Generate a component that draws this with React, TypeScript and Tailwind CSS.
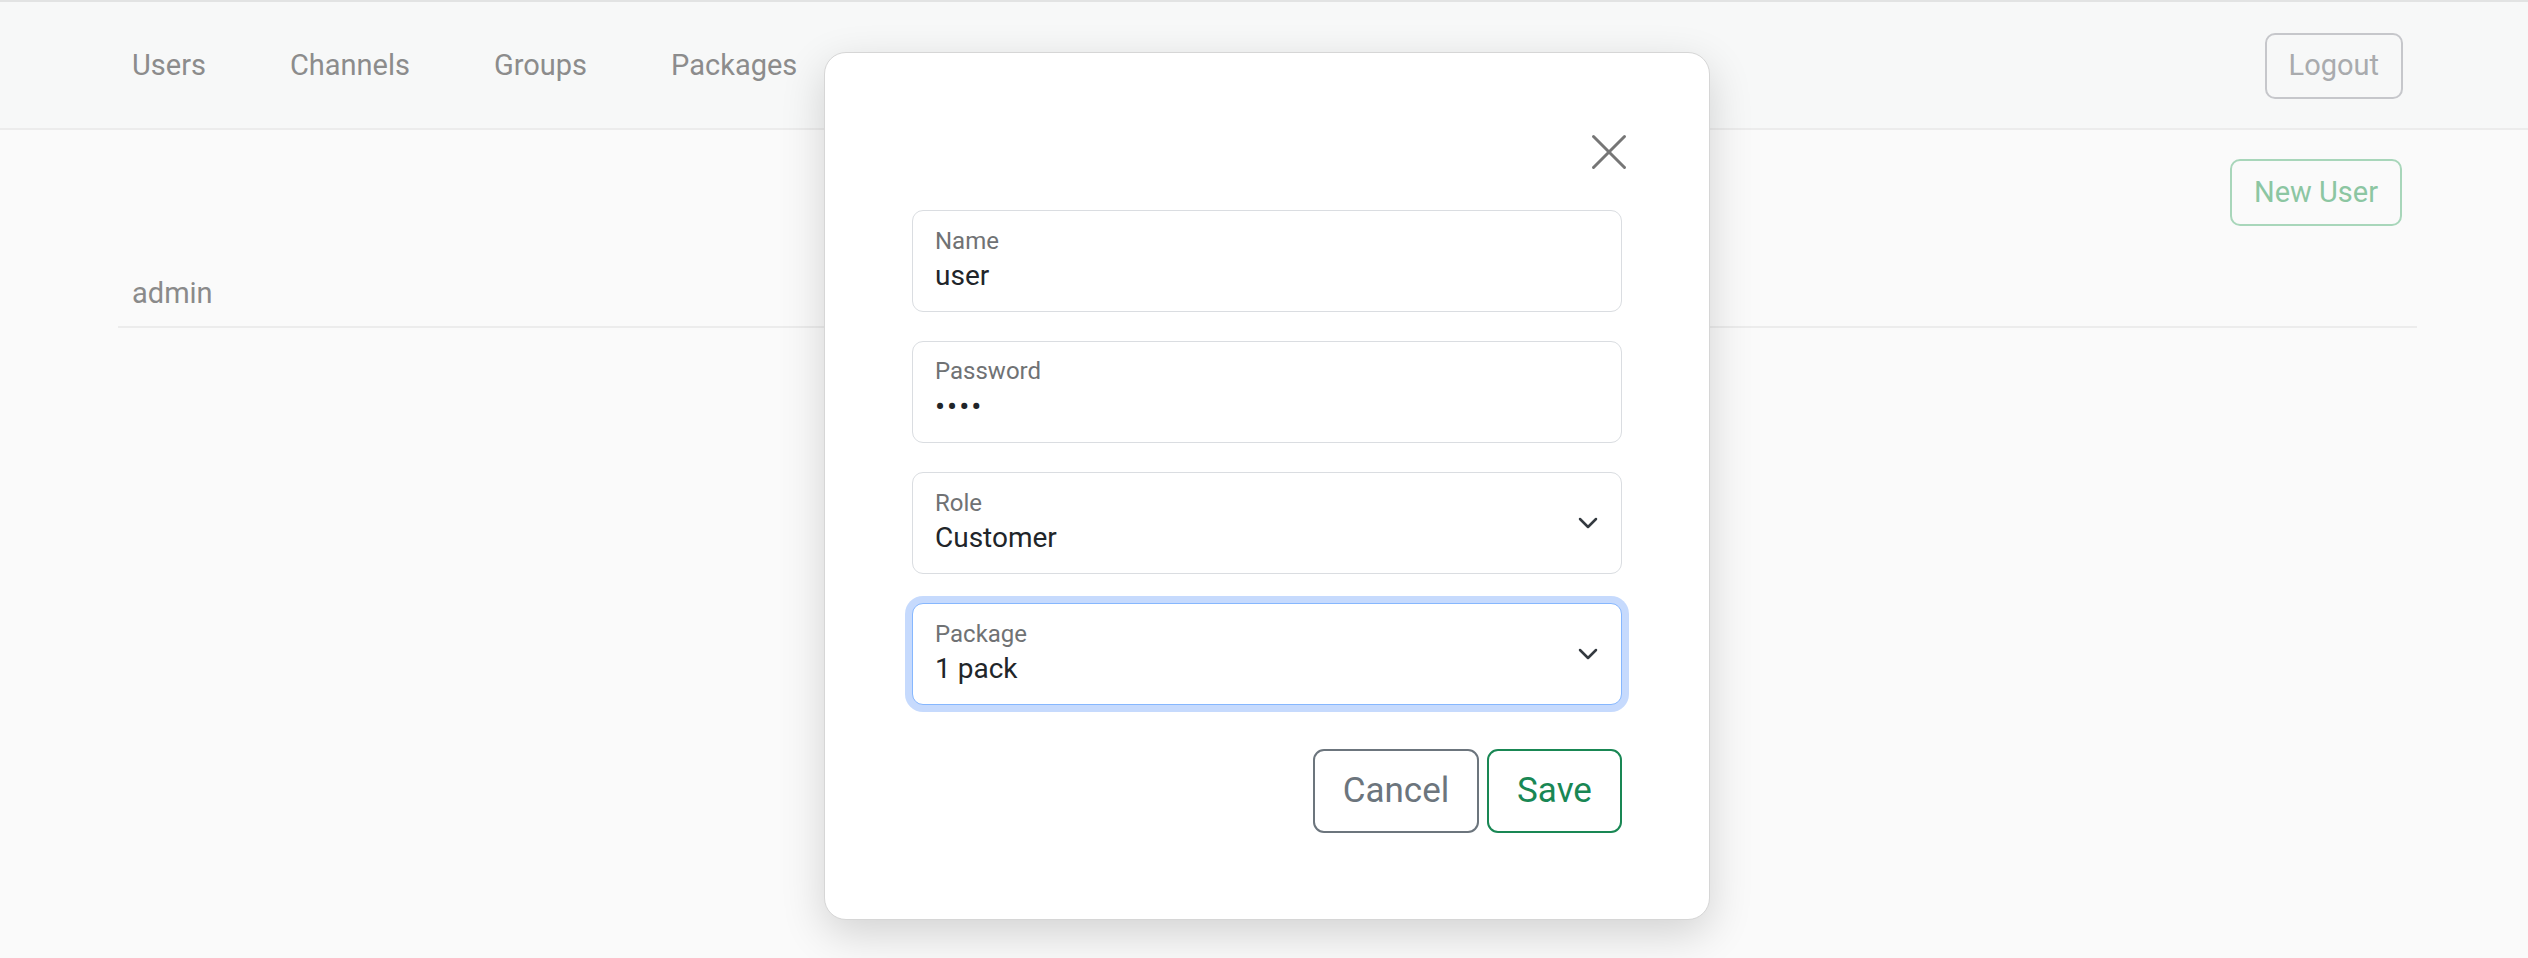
import { X } from 'lucide-react'

const font = { fontFamily: 'Roboto, "Liberation Sans", sans-serif' }

function Chevron() {
  return (
    <svg width="20" height="12" viewBox="0 0 20 12" fill="none" className="shrink-0">
      <path d="M2 2l8 8 8-8" stroke="#343a40" strokeWidth="2.5" strokeLinecap="round" strokeLinejoin="round" />
    </svg>
  )
}

function Field({ label, value, select, focus, secret }: { label: string; value: string; select?: boolean; focus?: boolean; secret?: boolean }) {
  return (
    <div
      className={
        'h-[102px] rounded-[11px] bg-white border flex items-center justify-between pl-[22px] pr-[23px] ' +
        (focus ? 'border-[#86b7fe] shadow-[0_0_0_7px_#c6dafd]' : 'border-[#dadde1]')
      }
    >
      <div className="flex flex-col pt-[1px] pb-[3px]">
        <span className="text-[24px] leading-[26px] text-[#707274]">{label}</span>
        {secret ? (
          <span className="text-[30px] leading-[34px] tracking-[2px] text-[#212529] mt-[6px]">{value}</span>
        ) : (
          <span className="text-[28px] leading-[34px] text-[#212529] mt-[5px]">{value}</span>
        )}
      </div>
      {select && <Chevron />}
    </div>
  )
}

export default function App() {
  return (
    <div className="relative min-h-screen bg-[#fafafa]" style={font}>
      {/* Navbar */}
      <nav className="h-[130px] bg-[#f7f8f8] border-t-2 border-b-2 border-t-[#e2e3e3] border-b-[#ececec]">
        <div className="ml-[118px] w-[2299px] h-full px-[14px] pt-[2px] flex items-center justify-between">
          <div className="flex items-center gap-[84px] text-[29px] text-[#8c8c8c]">
            <span>Users</span>
            <span>Channels</span>
            <span>Groups</span>
            <span>Packages</span>
          </div>
          <button className="h-[66px] px-[22px] rounded-[10px] border-2 border-[#c6c7cb] text-[29px] text-[#a9abae]">
            Logout
          </button>
        </div>
      </nav>

      {/* Content */}
      <div className="ml-[118px] w-[2299px]">
        <div className="flex justify-end pr-[15px] pt-[29px]">
          <button className="h-[67px] px-[22px] rounded-[10px] border-2 border-[#a8d6ba] text-[29px] text-[#8cc6a2]">
            New User
          </button>
        </div>
        <div className="mt-[34px] h-[68px] flex items-center pt-[2px] px-[14px] border-b-2 border-[#ececec] text-[29px] text-[#8a8a8a]">
          admin
        </div>
      </div>

      {/* Modal */}
      <div className="absolute inset-0 flex justify-center items-start pt-[52px] pl-[6px]">
        <div className="w-[886px] bg-white rounded-[22px] border border-[#d6d6d6] shadow-[0_14px_44px_rgba(0,0,0,0.16)] px-[87px] pt-[68px] pb-[86px]">
          <div className="flex justify-end -mr-[18px]">
            <X size={62} strokeWidth={1.15} className="text-[#767676]" />
          </div>
          <div className="mt-[27px] flex flex-col gap-[29px]">
            <Field label="Name" value="user" />
            <Field label="Password" value="••••" secret />
            <Field label="Role" value="Customer" select />
            <Field label="Package" value="1 pack" select focus />
          </div>
          <div className="mt-[44px] flex justify-end gap-[8px]">
            <button className="h-[84px] w-[166px] rounded-[11px] border-2 border-[#6c757d] text-[35px] text-[#6c757d]">
              Cancel
            </button>
            <button className="h-[84px] w-[135px] rounded-[11px] border-2 border-[#198754] text-[35px] text-[#198754]">
              Save
            </button>
          </div>
        </div>
      </div>
    </div>
  )
}
